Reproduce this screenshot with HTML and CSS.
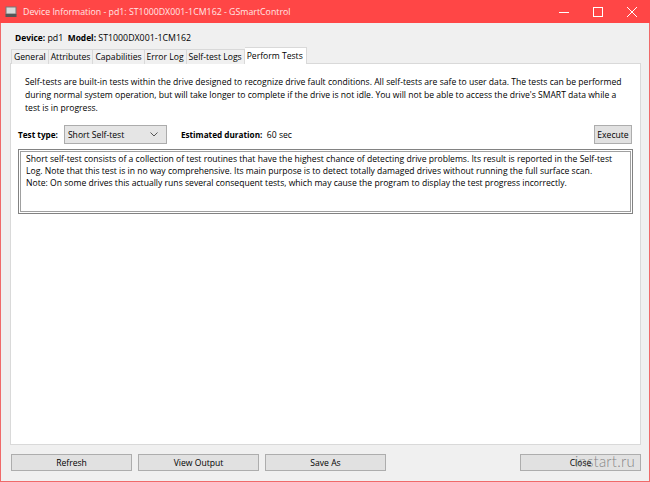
FILE: index.html
```html
<!DOCTYPE html>
<html>
<head>
<meta charset="utf-8">
<link rel="stylesheet" href="styles.css">
</head>
<body>
<div class="window">
  <div class="titlebar">
    <svg class="appicon" width="12" height="12" viewBox="0 0 12 12"><rect x="1" y="1" width="10" height="7" fill="#d8d8d8" stroke="#777" stroke-width="1"/><rect x="0.5" y="8" width="11" height="3" fill="#555"/></svg>
    <span class="title">Device Information - pd1: ST1000DX001-1CM162 - GSmartControl</span>
    <div class="controls">
      <svg width="10" height="10" viewBox="0 0 10 10"><line x1="0" y1="5.5" x2="10" y2="5.5" stroke="#fff" stroke-width="1"/></svg>
      <svg width="10" height="10" viewBox="0 0 10 10"><rect x="0.5" y="0.5" width="9" height="9" fill="none" stroke="#fff" stroke-width="1"/></svg>
      <svg width="10" height="10" viewBox="0 0 10 10"><path d="M0 0L10 10M10 0L0 10" stroke="#fff" stroke-width="1"/></svg>
    </div>
  </div>
  <div class="client">
    <div class="devline"><b>Device:</b> pd1&nbsp;&nbsp;<b>Model:</b> ST1000DX001-1CM162</div>
    <div class="tabs">
      <div class="tab">General</div>
      <div class="tab">Attributes</div>
      <div class="tab">Capabilities</div>
      <div class="tab">Error Log</div>
      <div class="tab">Self-test Logs</div>
      <div class="tab active">Perform Tests</div>
    </div>
    <div class="panel">
      <p class="desc">Self-tests are built-in tests within the drive designed to recognize drive fault conditions. All self-tests are safe to user data. The tests can be performed during normal system operation, but will take longer to complete if the drive is not idle. You will not be able to access the drive's SMART data while a test is in progress.</p>
      <div class="testrow">
        <b class="lbl">Test type:</b>
        <div class="combo"><span>Short Self-test</span>
          <svg width="8" height="5" viewBox="0 0 8 5"><path d="M0.5 0.5L4 4L7.5 0.5" fill="none" stroke="#555" stroke-width="1"/></svg>
        </div>
        <span class="dur"><b>Estimated duration:</b>&nbsp; 60 sec</span>
        <div class="execute">Execute</div>
      </div>
      <div class="textbox">
        <div class="textinner">Short self-test consists of a collection of test routines that have the highest chance of detecting drive problems. Its result is reported in the Self-test Log. Note that this test is in no way comprehensive. Its main purpose is to detect totally damaged drives without running the full surface scan.<br>Note: On some drives this actually runs several consequent tests, which may cause the program to display the test progress incorrectly.</div>
      </div>
    </div>
    <div class="buttons">
      <div class="btn">Refresh</div>
      <div class="btn">View Output</div>
      <div class="btn">Save As</div>
      <div class="spacer"></div>
      <div class="btn close">Close<span class="watermark">instart.ru</span></div>
    </div>
  </div>
</div>
</body>
</html>
```
FILE: styles.css
```css
* { box-sizing: border-box; }
html, body { margin: 0; padding: 0; }
body {
  width: 650px; height: 482px; overflow: hidden;
  font-family: "Open Sans", "Noto Sans", sans-serif;
  font-size: 8.6px; color: #000;
  background: #f0f0f0;
}
b { font-weight: 700; font-size: 8.2px; }
.window {
  width: 650px; height: 482px;
  display: flex; flex-direction: column;
  border: 1px solid #f06a6a; border-top: none;
  background: #f0f0f0;
}
.titlebar {
  height: 23px; flex: none;
  background: #ff4646;
  margin: 0 -1px;
  display: flex; align-items: center;
  padding-left: 5px;
  color: #fff;
}
.appicon { margin-right: 6px; }
.title { font-size: 8.8px; color: #ffe6e6; }
.controls { margin-left: auto; display: flex; gap: 24px; align-items: center; padding-right: 13px; }
.controls svg { display: block; }
.client { flex: 1; display: flex; flex-direction: column; padding: 0 8px 0 9px; }
.devline { height: 26px; padding: 9px 0 0 5px; font-size: 8.8px; }
.devline b { font-size: 8.4px; }
.tabs { display: flex; height: 15px; padding-left: 1px; position: relative; z-index: 1; }
.tab {
  height: 15px; padding: 0 2px; line-height: 14px;
  border: 1px solid #d9d9d9; border-right: none; border-bottom: none;
  background: #f0f0f0;
}
.tab:nth-child(5) { border-right: 1px solid #d9d9d9; }
.tab.active {
  height: 17px; margin-top: -2px; background: #fff; border: 1px solid #d9d9d9; border-bottom: none;
  padding: 0 3px 0 2px; line-height: 17px; border-left: none;
}
.panel {
  flex: none; height: 382px;
  background: #fff; border: 1px solid #d9d9d9;
  margin-top: -1px;
  padding: 12px 8px 0 7px;
  display: flex; flex-direction: column;
}
.desc { margin: 0 0 0 7px; line-height: 13px; width: 602px; }
.testrow { display: flex; align-items: center; height: 19px; margin-top: 10px; }
.lbl { margin-right: 6px; }
.combo {
  width: 103px; height: 19px; background: #e5e5e5; border: 1px solid #acacac;
  display: flex; align-items: center; justify-content: space-between; padding: 0 8px 0 3px;
}
.dur { margin-left: 14px; }
.execute {
  margin-left: auto; height: 19px; width: 38px; background: #e1e1e1; border: 1px solid #adadad;
  display: flex; align-items: center; justify-content: center;
}
.textbox { margin-top: 5px; height: 65px; border: 1px solid #828282; padding: 1px; width: 615px; }
.textinner { height: 100%; border: 1px solid #a0a0a0; padding: 1px 5px; line-height: 12px; }
.buttons { display: flex; gap: 6px; margin-top: 9px; padding-left: 1px; }
.btn {
  width: 121px; height: 17px; background: #e1e1e1; border: 1px solid #adadad;
  display: flex; align-items: center; justify-content: center; position: relative;
}
.spacer { flex: 1; }
.watermark {
  position: absolute; left: 54px; top: -3px;
  font-size: 15px; font-weight: 300; color: rgba(100,100,100,0.75); font-family: "Lato", "Open Sans", sans-serif; letter-spacing: 0.2px;
}
```
